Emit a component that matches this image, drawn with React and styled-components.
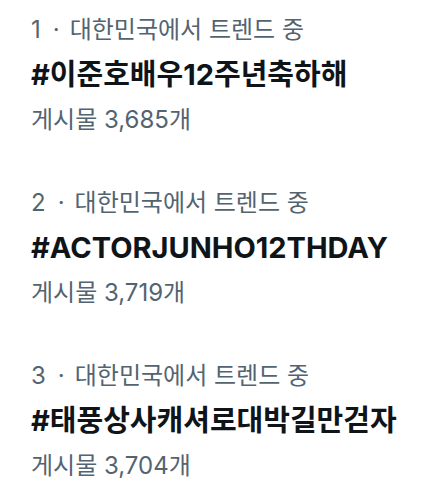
import React from "react";
import styled, { createGlobalStyle } from "styled-components";

const trends = [
  { rank: 1, tag: "#이준호배우12주년축하해", posts: "3,685" },
  { rank: 2, tag: "#ACTORJUNHO12THDAY", posts: "3,719" },
  { rank: 3, tag: "#태풍상사캐셔로대박길만걷자", posts: "3,704" },
];

const App = () => {
  return (
    <>
      <GlobalStyle />
      <List>
        {trends.map((t) => (
          <Item key={t.rank}>
            <Meta>
              {t.rank}
              <Dot>·</Dot>대한민국에서 트렌드 중
            </Meta>
            <Tag>{t.tag}</Tag>
            <Meta>게시물 {t.posts}개</Meta>
          </Item>
        ))}
      </List>
    </>
  );
};

const GlobalStyle = createGlobalStyle`
  body {
    margin: 0;
    background: #fff;
    font-family: "Inter", "Noto Sans CJK KR", sans-serif;
  }
`;

const List = styled.div`
  display: flex;
  flex-direction: column;
  gap: 51px;
  padding: 14px 31px;
`;

const Item = styled.div`
  display: flex;
  flex-direction: column;
  gap: 11px;
`;

const Meta = styled.div`
  font-size: 24px;
  line-height: 32px;
  color: #536471;
`;

const Dot = styled.span`
  margin: 0 10px 0 12px;
`;

const Tag = styled.div`
  font-size: 29px;
  line-height: 36px;
  font-weight: 700;
  color: #0f1419;
`;

export default App;
